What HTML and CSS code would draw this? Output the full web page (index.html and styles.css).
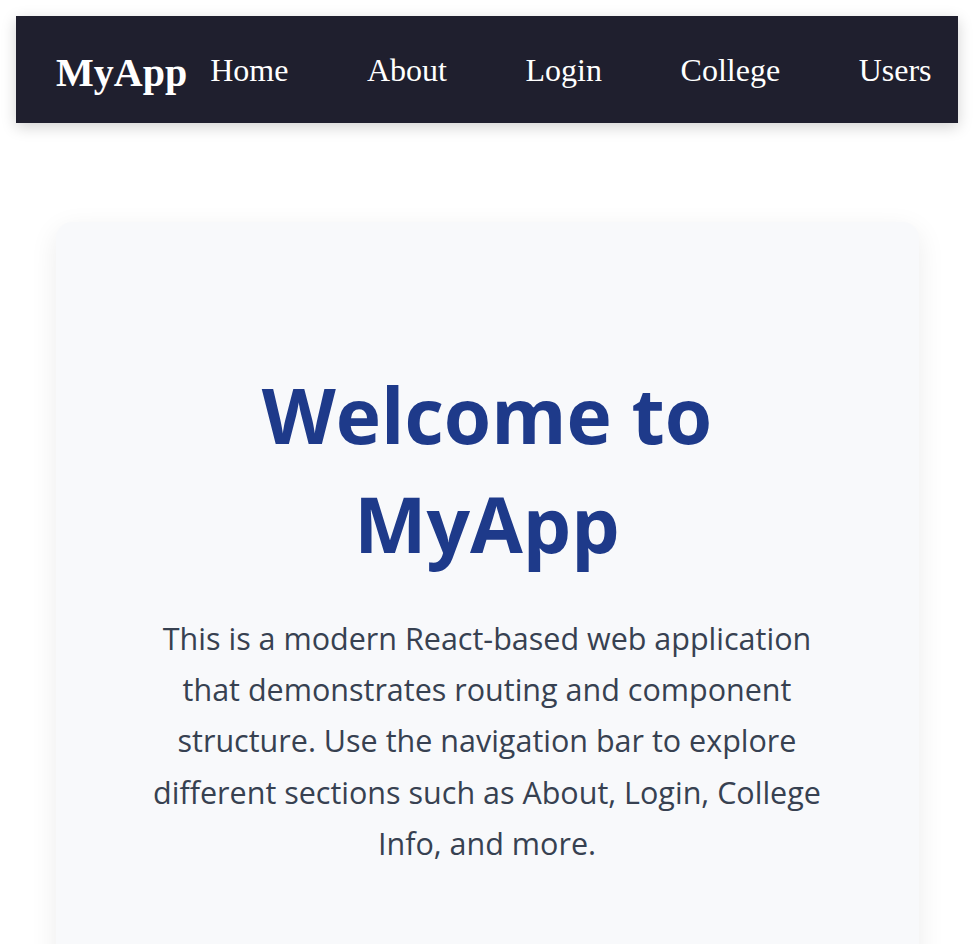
FILE: index.html
```
<!DOCTYPE html>
<html lang="en">
<head>
<meta charset="utf-8">
<title>MyApp</title>
<link rel="stylesheet" href="styles.css">
</head>
<body>
<div class="app">
  <nav class="navbar">
    <a class="brand" href="#">MyApp</a>
    <ul class="nav-links">
      <li><a href="#">Home</a></li>
      <li><a href="#">About</a></li>
      <li><a href="#">Login</a></li>
      <li><a href="#">College</a></li>
      <li><a href="#">Users</a></li>
    </ul>
  </nav>
  <main class="home">
    <section class="card">
      <h1 class="title">Welcome to MyApp</h1>
      <p class="lead">This is a modern React-based web application that demonstrates routing and component structure. Use the navigation bar to explore different sections such as About, Login, College Info, and more.</p>
    </section>
  </main>
</div>
</body>
</html>
```
FILE: styles.css
```
html, body {
  margin: 0;
  padding: 0;
  background: #ffffff;
}
body {
  font-family: "Liberation Serif", "Times New Roman", serif;
  overflow: hidden;
}
.app {
  padding: 16px;
}
.navbar {
  display: flex;
  align-items: center;
  height: 107px;
  padding: 0 28px 0 40px;
  background: #1f1f2e;
  box-shadow: 0 4px 14px rgba(0, 0, 0, 0.18);
}
.brand {
  color: #ffffff;
  text-decoration: none;
  font-weight: 700;
  font-size: 40px;
  line-height: 1;
  margin-top: 6px;
}
.nav-links {
  display: flex;
  gap: 78.6px;
  list-style: none;
  margin: 0 0 0 23px;
  padding: 0;
}
.nav-links a {
  color: #ffffff;
  text-decoration: none;
  font-size: 32px;
  line-height: 1;
}
.home {
  padding-top: 99px;
  display: flex;
  justify-content: center;
}
.card {
  width: 863px;
  box-sizing: border-box;
  background: #f8f9fb;
  border-radius: 16px;
  box-shadow: 0 8px 28px rgba(0, 0, 0, 0.08);
  padding: 138px 60px 136px;
  text-align: center;
}
.title {
  margin: 0 auto;
  max-width: 520px;
  font-family: "Open Sans", sans-serif;
  font-weight: 700;
  font-size: 76.6px;
  line-height: 109px;
  color: #1e3a8a;
}
.lead {
  margin: 35px auto 0;
  max-width: 690px;
  font-family: "Open Sans", sans-serif;
  font-size: 30.5px;
  line-height: 51.2px;
  color: #374151;
}
```
